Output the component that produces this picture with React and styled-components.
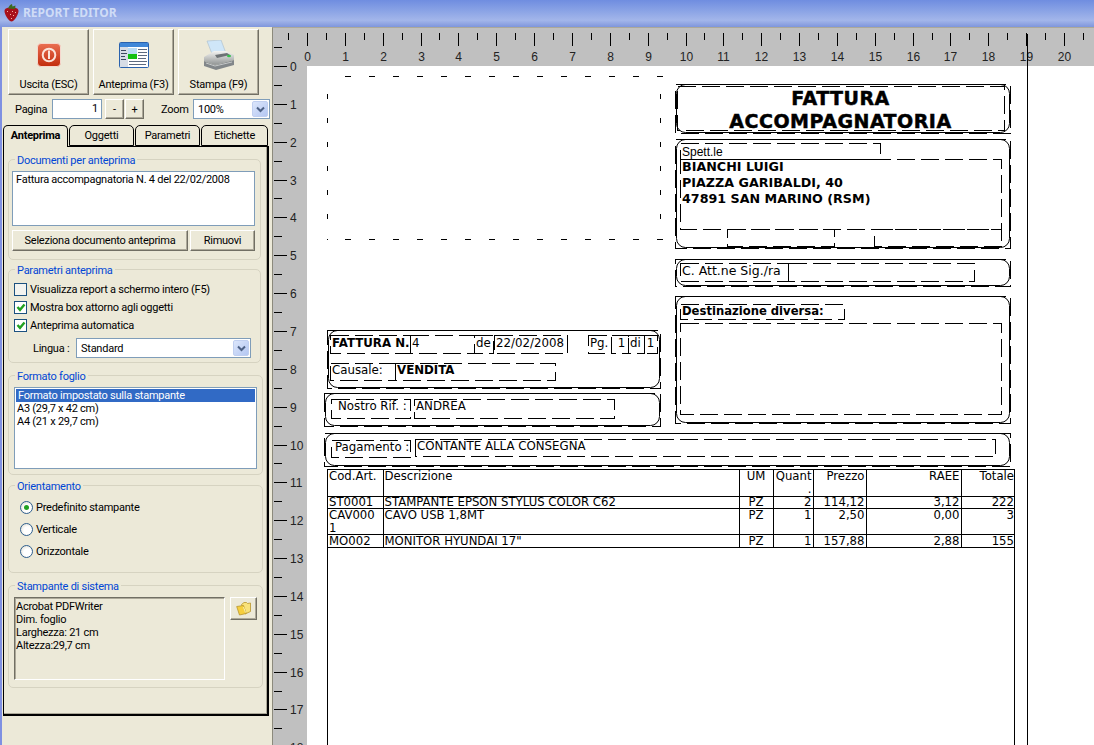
import React from 'react';
import styled, { createGlobalStyle } from 'styled-components';

const Global = createGlobalStyle`
  html, body { margin: 0; padding: 0; background: #ece9d8; overflow: hidden; }
  * { box-sizing: border-box; }
`;
const ui = `Roboto, "Liberation Sans", Arial, sans-serif`;
const lib = `"Liberation Sans", Arial, sans-serif`;
const rep = `"DejaVu Sans", Verdana, sans-serif`;

const Shell = styled.div`
  width: 1094px; height: 745px; display: flex; flex-direction: column; overflow: hidden;
  font: 11px ${ui}; letter-spacing: -.25px; color: #000; background: #ece9d8;
`;
const TitleBar = styled.header`
  height: 27px; flex: none; display: flex; align-items: center; gap: 4px; padding: 0 0 2px 4px;
  background: linear-gradient(180deg, #6f8de0 0%, #8ea6e6 45%, #a3b6ea 75%, #7f96dc 100%);
`;
const TitleText = styled.span`
  font: bold 12px "Noto Sans", ${lib}; color: #cfdcf6; letter-spacing: 0;
`;
const Main = styled.div`flex: 1; display: flex; min-height: 0;`;
const Side = styled.aside`
  width: 272px; flex: none; border-left: 2px solid #7f90e2; padding: 2px 0 0 1px;
  display: flex; flex-direction: column;
`;
const TopButtons = styled.div`display: flex; gap: 4px; padding-left: 5px;`;
const Raised = styled.button`
  background: #ece9d8; padding: 0; margin: 0; font: 11px ${ui}; letter-spacing: -.25px; color: #000;
  border: 1px solid; border-color: #fff #716f64 #716f64 #fff;
  box-shadow: inset -1px -1px 0 #aca899; flex: none;
`;
const BigButton = styled(Raised)`
  width: ${p => p.$w}px; height: 66px; display: flex; flex-direction: column; align-items: center;
  padding-top: ${p => p.$pt}px; position: relative;
`;
const BigLabel = styled.span`position: absolute; left: 0; right: 0; bottom: 2px; text-align: center; line-height: 14px; white-space: nowrap;`;
const PageRow = styled.div`display: flex; align-items: center; height: 20px; margin-top: 4px; padding-left: 12px;`;
const Caption = styled.span`width: ${p => p.$w}px; flex: none; margin-left: ${p => p.$ml || 0}px;`;
const PageInput = styled.div`
  width: 50px; height: 20px; flex: none; background: #fff; border: 1px solid #7f9db9; text-align: right;
  padding-right: 3px; line-height: 17px;
`;
const StepButton = styled(Raised)`width: 19px; height: 20px; margin-left: ${p => p.$ml}px; line-height: 15px;`;
const SelectBox = styled.div`
  width: ${p => p.$w}px; height: 20px; background: #fff; border: 1px solid #7f9db9; display: flex;
  align-items: center; justify-content: space-between; padding: 0 1px 0 4px; flex: none;
`;
const Arrow = styled.span`
  width: 16px; height: 16px; background: linear-gradient(135deg, #dce6fb, #b4c7f2); border: 1px solid #c0cff0;
  border-radius: 2px; display: flex; align-items: center; justify-content: center;
`;
const TabStrip = styled.div`display: flex; height: 22px; margin-top: 6px; position: relative; z-index: 1;`;
const Tab = styled.div`
  width: ${p => p.$w}px; height: ${p => (p.$on ? 22 : 21)}px;
  background: #ece9d8; border: 1px solid #000; border-bottom: ${p => (p.$on ? 'none' : '1px solid #000')};
  border-radius: 5px 5px 0 0; text-align: center; line-height: 19px;
  font-weight: ${p => (p.$on ? 'bold' : 'normal')};
  margin-right: 1px;
`;
const TabPanel = styled.div`
  width: 266px; height: 570px; margin-top: -1px; border: 1px solid #000; border-width: 1px 2px 2px 1px;
  box-shadow: inset -1px -1px 0 #aca899;
  padding: 6px 0 0 4px; display: flex; flex-direction: column;
`;
const Group = styled.fieldset`
  margin: ${p => p.$gap}px 0 0 0; padding: 0 0 0 4px; width: ${p => p.$w}px; height: ${p => p.$h}px;
  border: 1px solid #d6d3c1; border-radius: 5px; min-width: 0; position: relative;
  flex: none;
`;
const GroupTitle = styled.legend`
  color: #0046d5; padding: 0 2px; margin-left: 2px; line-height: 13px; height: 13px; position: relative; top: 1px;
`;
const DocList = styled.div`
  width: 243px; height: 55px; background: #fff; border: 1px solid #7f9db9; margin: 5px 0 0 -1px; padding: 1px 3px; line-height: 14px;
  white-space: nowrap;
`;
const DocButtons = styled.div`display: flex; gap: 2px; margin: 4px 0 0 -1px;`;
const WideButton = styled(Raised)`width: ${p => p.$w}px; height: 21px;`;
const CheckRow = styled.div`display: flex; align-items: center; gap: 3px; height: 18px; padding-left: 1px;`;
const CheckGroup = styled.div`margin-top: 4px; display: flex; flex-direction: column;`;
const Check = styled.span`
  width: 13px; height: 13px; flex: none; background: ${p => (p.$on ? '#fff' : '#f4f4f0')}; border: 1px solid #1c5180;
  display: flex; align-items: center; justify-content: center;
`;
const LangRow = styled.div`display: flex; align-items: center; height: 20px; margin-top: 4px; padding-left: 20px;`;
const ListBox = styled.div`
  width: 243px; height: 82px; background: #fff; border: 1px solid #7f9db9; margin: 5px 0 0 1px; padding: 1px; line-height: 13px;
`;
const ListItem = styled.div`
  height: 13px; padding-left: ${p => (p.$on ? 2 : 1)}px; background: ${p => (p.$on ? '#316ac5' : 'transparent')}; color: ${p => (p.$on ? '#fff' : '#000')};
`;
const RadioStack = styled.div`display: flex; flex-direction: column; gap: 9px; margin-top: 9px; padding-left: 7px;`;
const RadioRow = styled.div`display: flex; align-items: center; gap: 3px; height: 13px;`;
const Radio = styled.span`
  width: 13px; height: 13px; border-radius: 50%; border: 1px solid #2f5f8f; flex: none;
  background: radial-gradient(circle at 60% 60%, #fff 40%, #d8d6c8 100%);
  display: flex; align-items: center; justify-content: center;
`;
const RadioDot = styled.span`width: 5px; height: 5px; border-radius: 50%; background: #21a121;`;
const PrinterRow = styled.div`display: flex; gap: 5px; margin-top: 5px; padding-left: 1px;`;
const PrinterInfo = styled.div`
  width: 211px; height: 83px; background: #ece9d8; border: 1px solid; border-color: #716f64 #fff #fff #716f64;
  box-shadow: inset 1px 1px 0 #aca899; padding: 2px 1px; line-height: 13px;
`;
const FolderButton = styled(Raised)`
  width: 27px; height: 23px; display: flex; align-items: center; justify-content: center;
`;

const Workspace = styled.div`
  flex: 1; display: grid; grid-template-columns: 34px 1fr; grid-template-rows: 38px 1fr; position: relative;
  min-width: 0; border-top: 1px solid #aca899; border-left: 1px solid #8c8a7c;
  background: #c0c0c0; letter-spacing: 0;
`;
const TopRuler = styled.svg`grid-column: 1 / 3; display: block; background: #c0c0c0;`;
const LeftRuler = styled.svg`display: block; background: #c0c0c0; overflow: visible;`;
const RulerText = styled.text`font: 12px ${lib}; fill: #222;`;
const Sheet = styled.div`background: #fff; position: relative; overflow: hidden; font-family: ${rep}; font-size: 11.8px;`;
const MarginLine = styled.div`position: absolute; left: 754px; top: 6px; bottom: 0; width: 1px; background: #000;`;

const Placed = styled.div`
  position: absolute; left: ${p => p.$x - 307}px; top: ${p => p.$y - 66}px; width: ${p => p.$w}px; height: ${p => p.$h}px;
`;
const Outline = styled.svg`position: absolute; left: 0; top: 0; overflow: visible; shape-rendering: crispEdges;`;
const Curve = styled.svg`position: absolute; left: 0; top: 0;`;
const FieldText = styled.div`
  position: relative; padding: ${p => p.$pt ?? 1}px 0 0 ${p => p.$pl ?? 2}px; line-height: 14px; white-space: nowrap;
  font-family: ${p => (p.$sans ? lib : rep)}; font-weight: ${p => (p.$bold ? 'bold' : 'normal')};
  font-size: ${p => p.$size || 11.8}px; text-align: ${p => p.$align || 'left'};
`;
const ReportTitle = styled.div`
  position: relative; font: 900 19px/23px ${rep}; text-align: center; padding: 3px 5px 0 0; letter-spacing: .5px;
  -webkit-text-stroke: .5px #000;
`;
const Address = styled.div`
  position: relative; font: bold 12.7px/16px ${rep}; padding: 0 0 0 2px; white-space: pre-line;
`;
const ItemsWrap = styled.div`
  position: absolute; left: 20px; top: 403px; width: 688px; bottom: 0;
  border: 1px solid #000; border-bottom: none;
`;
const Items = styled.table`
  border-collapse: collapse; table-layout: fixed; width: 687px; font: 11.7px/11px ${rep}; margin-top: -1px;
`;
const Cell = styled.td`
  border-top: 1px solid #000; border-bottom: 1px solid #000; border-right: 1px solid #000; padding: 0 1px; vertical-align: top; overflow: hidden;
  text-align: ${p => p.$a || 'left'}; height: ${p => p.$h}px; white-space: nowrap; line-height: ${p => p.$lh || 11}px;
  &:last-child { border-right: none; }
`;

const Chevron = () => (
  <svg width="9" height="7" viewBox="0 0 9 7"><path d="M1 1.5 4.5 5 8 1.5" fill="none" stroke="#4d6185" strokeWidth="2" /></svg>
);
const Tick = () => (
  <svg width="10" height="9" viewBox="0 0 10 9"><path d="M1.500 4 4 6.800 8.500 1.500" fill="none" stroke="#21a121" strokeWidth="2.400" /></svg>
);
const Strawberry = () => (
  <svg width="15" height="18" viewBox="0 0 15 18">
    <path d="M.5 7C.5 4 4 3.500 7.500 3.500S14.500 4 14.500 7C14.500 11 10 17.500 7.500 17.500S.5 11 .5 7Z" fill="#a8101a" />
    <path d="M4 4.500C5 2 6 1 7 .5L8 0 8.500 2.500 11.500 1.500 11 5Z" fill="#3c6a22" />
    <g fill="#f4b0a0"><rect x="3" y="7" width="1" height="1" /><rect x="8" y="7" width="1" height="1" /><rect x="11" y="8" width="1" height="1" /><rect x="6" y="10" width="1" height="1" /><rect x="9" y="11" width="1" height="1" /><rect x="7" y="14" width="1" height="1" /></g>
  </svg>
);
const PowerIcon = () => (
  <svg width="24" height="24" viewBox="0 0 24 24">
    <defs><linearGradient id="pw" x1="0" y1="0" x2="0" y2="1"><stop offset="0" stopColor="#ea6f52" /><stop offset="1" stopColor="#c22c0c" /></linearGradient></defs>
    <rect x=".5" y=".5" width="23" height="23" rx="3.5" fill="url(#pw)" stroke="#f6d7cd" />
    <circle cx="12" cy="12" r="6.3" fill="none" stroke="#fbe3da" strokeWidth="2" />
    <rect x="11" y="7.500" width="2" height="8.500" fill="#fbe3da" />
  </svg>
);
const WindowIcon = () => (
  <svg width="30" height="26" viewBox="0 0 30 26">
    <rect x=".5" y=".5" width="29" height="25" rx="1" fill="#fff" stroke="#2a62ad" />
    <rect x="1" y="1" width="28" height="4" fill="#3f87d8" />
    <rect x="1" y="5" width="8" height="20" fill="#d7dde6" />
    <g fill="#3c4a60"><rect x="2" y="8" width="5" height="1" /><rect x="2" y="11" width="6" height="1" /><rect x="2" y="14" width="4" height="1" /><rect x="2" y="17" width="5" height="1" /></g>
    <rect x="9" y="6" width="9" height="7" fill="#b9dcf5" />
    <rect x="9" y="12" width="9" height="5" fill="#12c012" />
    <g fill="#5c6a80"><rect x="19" y="7" width="9" height="1" /><rect x="19" y="10" width="9" height="1" /><rect x="19" y="13" width="9" height="1" /><rect x="19" y="16" width="8" height="1" /><rect x="10" y="19" width="18" height="1" /><rect x="10" y="22" width="17" height="1" /></g>
  </svg>
);
const PrinterIcon = () => (
  <svg width="32" height="31" viewBox="0 0 32 31">
    <defs><linearGradient id="pb" x1="0" y1="0" x2="0" y2="1"><stop offset="0" stopColor="#f4f4f2" /><stop offset="1" stopColor="#8f9393" /></linearGradient></defs>
    <path d="M4 1 18 0 24 16 11 19Z" fill="#cfe6f8" stroke="#a9bccb" strokeWidth=".6" />
    <path d="M1 17 11 11 23 11 31 15 31 20 12 25 1 21Z" fill="url(#pb)" />
    <path d="M1 21 12 25 31 20 31 25 13 30 1 26Z" fill="#82878a" />
    <path d="M3 23 12 26 29 22" fill="none" stroke="#c5c8c8" />
    <path d="M12 15 24 13 27 15 14 18Z" fill="#6d7275" />
    <ellipse cx="26" cy="16" rx="2" ry="1.300" fill="#37c04a" />
  </svg>
);
const FolderIcon = () => (
  <svg width="15" height="15" viewBox="0 0 15 15">
    <path d="M5.500 3.500 8 1.500H10.500L11.500 2.500 14.500 2V10.500L9 13Z" fill="#f9e27a" stroke="#b8952e" strokeWidth=".8" />
    <path d="M.7 5.500 7.500 4.500 10.200 12.500 3.500 14Z" fill="#f6cf3e" stroke="#b8952e" strokeWidth=".8" />
    <path d="M7.500 6 9.500 11.500" stroke="#fdf2b0" strokeWidth="1" />
  </svg>
);

const CM = 37.85;
const Horizontal = () => {
  const marks = [];
  for (let i = -1; i <= 41; i++) {
    const x = Math.round(34 + (i / 2) * CM) + .5;
    const major = i % 2 === 0;
    marks.push(<line key={i} x1={x} x2={x} y1="5" y2={major ? 18 : 12} stroke="#000" />);
    if (major) marks.push(<RulerText key={`t${i}`} x={x} y="33" textAnchor="middle">{i / 2}</RulerText>);
  }
  return <TopRuler width="821" height="38">{marks}</TopRuler>;
};
const Vertical = () => {
  const marks = [];
  for (let i = -1; i <= 36; i++) {
    const y = Math.round((i / 2) * CM) + .5;
    const major = i % 2 === 0;
    marks.push(<line key={i} x1="1" x2={major ? 14 : 9} y1={y} y2={y} stroke="#000" />);
    if (major) marks.push(<RulerText key={`t${i}`} x="17" y={y + 4} >{i / 2}</RulerText>);
  }
  return <LeftRuler width="34" height="679">{marks}</LeftRuler>;
};

const Dashes = ({ w, h }) => (
  <Outline width={w} height={h}>
    <rect x=".5" y=".5" width={w - 1} height={h - 1} fill="none" stroke="#000" strokeDasharray="18 6" />
  </Outline>
);
const Field = ({ x, y, w, h, children, ...t }) => (
  <Placed $x={x} $y={y} $w={w} $h={h}>
    <Dashes w={w} h={h} />
    {children && <FieldText {...t}>{children}</FieldText>}
  </Placed>
);
const Rounded = ({ x, y, w, h, children }) => (
  <Placed $x={x} $y={y} $w={w} $h={h}>
    <Dashes w={w} h={h} />
    <Curve width={w} height={h}>
      <rect x="1.5" y=".5" width={w - 3} height={h - 2} rx="9" fill="none" stroke="#000" />
    </Curve>
    {children}
  </Placed>
);
const LogoArea = () => {
  const d = [];
  for (let x = 345; x < 660; x += 24) {
    d.push(`M${x} 76.5h6`, `M${x} 239.5h6`);
  }
  for (let y = 94; y < 235; y += 24) {
    d.push(`M327.5 ${y}v5`, `M660.5 ${y}v5`);
  }
  d.push('M327.500 239v1');
  return (
    <Placed $x={307} $y={66} $w={360} $h={180}>
      <Outline width="360" height="180" viewBox="307 66 360 180"><path d={d.join('')} stroke="#000" fill="none" /></Outline>
    </Placed>
  );
};

const rows = [
  ['ST0001', 'STAMPANTE EPSON STYLUS COLOR C62', 'PZ', '2', '114,12', '3,12', '222', 12, 11],
  [<>CAV000<br />1</>, 'CAVO USB 1,8MT', 'PZ', '1', '2,50', '0,00', '3', 25, 12.5],
  ['MO002', 'MONITOR HYUNDAI 17"', 'PZ', '1', '157,88', '2,88', '155', 13, 12],
];

export default function App() {
  return (
    <Shell>
      <Global />
      <TitleBar><Strawberry /><TitleText>REPORT EDITOR</TitleText></TitleBar>
      <Main>
        <Side>
          <TopButtons>
            <BigButton $w={81} $pt={13}><PowerIcon /><BigLabel>Uscita (ESC)</BigLabel></BigButton>
            <BigButton $w={81} $pt={12}><WindowIcon /><BigLabel>Anteprima (F3)</BigLabel></BigButton>
            <BigButton $w={81} $pt={10}><PrinterIcon /><BigLabel>Stampa (F9)</BigLabel></BigButton>
          </TopButtons>
          <PageRow>
            <Caption $w={37}>Pagina</Caption>
            <PageInput>1</PageInput>
            <StepButton $ml={3}>-</StepButton>
            <StepButton $ml={1}>+</StepButton>
            <Caption $w={32} $ml={17}>Zoom</Caption>
            <SelectBox $w={77}>100%<Arrow><Chevron /></Arrow></SelectBox>
          </PageRow>
          <TabStrip>
            <Tab $w={65} $on>Anteprima</Tab>
            <Tab $w={65}>Oggetti</Tab>
            <Tab $w={65}>Parametri</Tab>
            <Tab $w={67}>Etichette</Tab>
          </TabStrip>
          <TabPanel>
            <Group $gap={0} $w={253} $h={107}>
              <GroupTitle>Documenti per anteprima</GroupTitle>
              <DocList>Fattura accompagnatoria N. 4 del 22/02/2008</DocList>
              <DocButtons>
                <WideButton $w={176}>Seleziona documento anteprima</WideButton>
                <WideButton $w={65}>Rimuovi</WideButton>
              </DocButtons>
            </Group>
            <Group $gap={3} $w={253} $h={100}>
              <GroupTitle>Parametri anteprima</GroupTitle>
              <CheckGroup>
                <CheckRow><Check />Visualizza report a schermo intero (F5)</CheckRow>
                <CheckRow><Check $on><Tick /></Check>Mostra box attorno agli oggetti</CheckRow>
                <CheckRow><Check $on><Tick /></Check>Anteprima automatica</CheckRow>
              </CheckGroup>
              <LangRow>
                <Caption $w={43}>Lingua :</Caption>
                <SelectBox $w={175}>Standard<Arrow><Chevron /></Arrow></SelectBox>
              </LangRow>
            </Group>
            <Group $gap={6} $w={255} $h={106}>
              <GroupTitle>Formato foglio</GroupTitle>
              <ListBox>
                <ListItem $on>Formato impostato sulla stampante</ListItem>
                <ListItem>A3 (29,7 x 42 cm)</ListItem>
                <ListItem>A4 (21 x 29,7 cm)</ListItem>
              </ListBox>
            </Group>
            <Group $gap={4} $w={255} $h={94}>
              <GroupTitle>Orientamento</GroupTitle>
              <RadioStack>
                <RadioRow><Radio><RadioDot /></Radio>Predefinito stampante</RadioRow>
                <RadioRow><Radio />Verticale</RadioRow>
                <RadioRow><Radio />Orizzontale</RadioRow>
              </RadioStack>
            </Group>
            <Group $gap={6} $w={255} $h={109}>
              <GroupTitle>Stampante di sistema</GroupTitle>
              <PrinterRow>
                <PrinterInfo>Acrobat PDFWriter<br />Dim. foglio<br />Larghezza: 21 cm<br />Altezza:29,7 cm</PrinterInfo>
                <FolderButton><FolderIcon /></FolderButton>
              </PrinterRow>
            </Group>
          </TabPanel>
        </Side>
        <Workspace>
          <Horizontal />
          <Vertical />
          <Sheet>
            <LogoArea />
            <Rounded x={675} y={84} w={336} h={50}>
              <ReportTitle>FATTURA<br />ACCOMPAGNATORIA</ReportTitle>
            </Rounded>
            <Field x={677} y={86} w={328} h={45} />
            <Rounded x={675} y={139} w={336} h={110} />
            <Field x={680} y={143} w={201} h={17} $sans $size={12} $pt={2}>Spett.le</Field>
            <Field x={680} y={159} w={322} h={71} />
            <Placed $x={680} $y={159} $w={322} $h={71}><Address>{'BIANCHI LUIGI\nPIAZZA GARIBALDI, 40\n47891 SAN MARINO (RSM)'}</Address></Placed>
            <Field x={727} y={229} w={108} h={18} />
            <Field x={874} y={229} w={128} h={18} />

            <Rounded x={675} y={259} w={336} h={28} />
            <Field x={680} y={263} w={109} h={19} $pt={1} $size={12.5}>C. Att.ne Sig./ra</Field>
            <Field x={788} y={263} w={187} h={19} />

            <Rounded x={675} y={296} w={336} h={128} />
            <Field x={680} y={304} w={165} h={16} $bold $size={11.6} $pt={0}>Destinazione diversa:</Field>
            <Field x={680} y={323} w={322} h={92} />

            <Rounded x={327} y={330} w={334} h={59} />
            <Field x={330} y={335} w={81} h={19} $bold>FATTURA N.</Field>
            <Field x={410} y={335} w={65} h={19}>4</Field>
            <Field x={474} y={335} w={20} h={19}>de</Field>
            <Field x={494} y={335} w={74} h={19}>22/02/2008</Field>
            <Field x={588} y={335} w={24} h={19}>Pg.</Field>
            <Field x={611} y={335} w={18} h={19} $align="right" $pl={0}>1&nbsp;</Field>
            <Field x={628} y={335} w={17} h={19}>di</Field>
            <Field x={644} y={335} w={14} h={19} $align="right" $pl={0}>1&nbsp;</Field>
            <Field x={330} y={363} w={66} h={18} $pt={0}>Causale:</Field>
            <Field x={395} y={363} w={161} h={18} $bold $pt={0}>VENDITA</Field>

            <Rounded x={324} y={393} w={337} h={34} />
            <Field x={331} y={399} w={80} h={20} $pl={7} $pt={0}>Nostro Rif. :</Field>
            <Field x={414} y={399} w={201} h={20} $pt={0}>ANDREA</Field>

            <Rounded x={324} y={433} w={687} h={34} />
            <Field x={331} y={440} w={80} h={18} $pl={4} $pt={0}>Pagamento :</Field>
            <Field x={415} y={439} w={581} h={18} $pt={0}>CONTANTE ALLA CONSEGNA</Field>

            <ItemsWrap>
              <Items>
                <colgroup><col width="55" /><col width="356" /><col width="34" /><col width="40" /><col width="53" /><col width="95" /><col width="54" /></colgroup>
                <tbody>
                  <tr>
                    <Cell $h={26} $lh={13}>Cod.Art.</Cell><Cell $lh={13}>Descrizione</Cell><Cell $a="center" $lh={13}>UM</Cell>
                    <Cell $a="right" $lh={13}>Quant<br />.</Cell><Cell $a="right" $lh={13}>Prezzo</Cell><Cell $a="right" $lh={13}>RAEE</Cell><Cell $a="right" $lh={13}>Totale</Cell>
                  </tr>
                  {rows.map((r, i) => (
                    <tr key={i}>
                      <Cell $h={r[7]} $lh={r[8]}>{r[0]}</Cell><Cell $lh={r[8]}>{r[1]}</Cell><Cell $a="center" $lh={r[8]}>{r[2]}</Cell>
                      <Cell $a="right" $lh={r[8]}>{r[3]}</Cell><Cell $a="right" $lh={r[8]}>{r[4]}</Cell><Cell $a="right" $lh={r[8]}>{r[5]}</Cell><Cell $a="right" $lh={r[8]}>{r[6]}</Cell>
                    </tr>
                  ))}
                </tbody>
              </Items>
            </ItemsWrap>
          </Sheet>
          <MarginLine />
        </Workspace>
      </Main>
    </Shell>
  );
}
